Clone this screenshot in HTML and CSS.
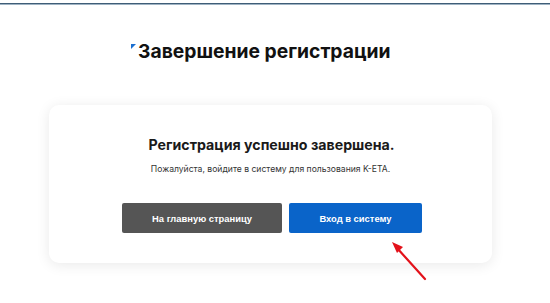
FILE: index.html
```html
<!DOCTYPE html>
<html lang="ru">
<head>
<meta charset="utf-8">
<link rel="stylesheet" href="styles.css">
</head>
<body>
<div class="topline"></div>
<header class="page-head">
  <span class="mark"></span>
  <h1 class="title">Завершение регистрации</h1>
</header>
<main class="card">
  <h2 class="card-title">Регистрация успешно завершена.</h2>
  <p class="card-text">Пожалуйста, войдите в систему для пользования K-ETA.</p>
  <div class="actions">
    <button class="btn btn-grey">На главную страницу</button>
    <button class="btn btn-blue">Вход в систему</button>
  </div>
</main>
<svg class="arrow" width="60" height="60" viewBox="0 0 60 60">
  <line x1="44" y1="52" x2="16" y2="21" stroke="#e3121b" stroke-width="2.2" stroke-linecap="round"/>
  <polygon points="11,15 22,20 16,26" fill="#e3121b"/>
</svg>
</body>
</html>
```
FILE: styles.css
```css
html, body {
  margin: 0;
  padding: 0;
  background: #ffffff;
  font-family: Inter, "Noto Sans", "Liberation Sans", sans-serif;
  width: 550px;
  height: 303px;
  overflow: hidden;
  position: relative;
}
.topline {
  margin-top: 3px;
  height: 1px;
  background: #3f5d77;
  border-bottom: 1px solid #9fb3c3;
}
.page-head {
  display: flex;
  align-items: flex-start;
  padding: 34px 0 0 131px;
  height: 63px;
  box-sizing: border-box;
}
.mark {
  width: 0;
  height: 0;
  border-top: 5px solid #1b6fd0;
  border-right: 5px solid transparent;
  margin-top: 5px;
  margin-right: 2px;
}
.title {
  margin: 0;
  font-size: 19.3px;
  line-height: 24px;
  font-weight: 700;
  color: #111111;
  letter-spacing: 0;
}
.card {
  margin: 0 0 0 49px;
  margin-top: 37px;
  width: 443px;
  height: 158px;
  box-sizing: border-box;
  background: #ffffff;
  border-radius: 10px;
  box-shadow: 0 2px 14px rgba(0, 0, 0, 0.09);
  display: flex;
  flex-direction: column;
  align-items: center;
  padding-top: 31px;
}
.card-title {
  margin: 0 0 0 2px;
  font-size: 14.2px;
  line-height: 18px;
  font-weight: 700;
  color: #1a1a1a;
}
.card-text {
  margin: 10px 0 0;
  font-size: 8.6px;
  line-height: 11px;
  color: #333333;
}
.actions {
  display: flex;
  gap: 7px;
  margin-top: 28px;
  margin-left: 3px;
}
.btn {
  height: 30px;
  border: none;
  border-radius: 2px;
  color: #ffffff;
  font-family: "Liberation Sans", Arial, sans-serif;
  font-size: 9.4px;
  font-weight: 700;
  padding: 0;
}
.btn-grey {
  width: 160px;
  background: #555555;
}
.btn-blue {
  width: 133px;
  background: #0a64c9;
}
.arrow {
  position: absolute;
  left: 381px;
  top: 227px;
}
```
